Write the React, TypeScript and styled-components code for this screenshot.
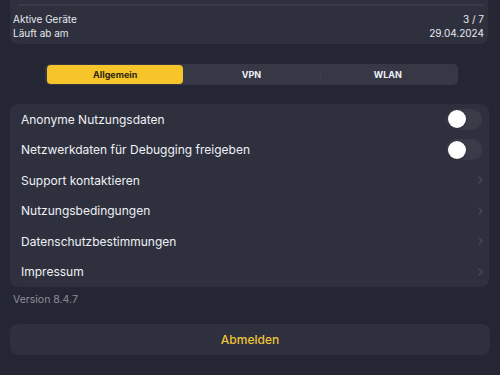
import React, { useState } from "react";
import styled, { createGlobalStyle } from "styled-components";

const GlobalStyle = createGlobalStyle`
  html, body {
    margin: 0;
    padding: 0;
    background: #252633;
    font-family: Inter, "Noto Sans", "Liberation Sans", sans-serif;
    overflow: hidden;
  }
`;

const Page = styled.div`
  width: 500px;
  height: 375px;
  box-sizing: border-box;
  padding: 0 11px 0 10px;
  display: flex;
  flex-direction: column;
  color: #eceef4;
`;

const Card = styled.div`
  background: #2e303e;
  border-radius: 8px;
`;

const InfoCard = styled(Card)`
  border-top-left-radius: 0;
  border-top-right-radius: 0;
  padding: 4px 4px 4px 3px;
  margin-right: 1px;
`;

const Divider = styled.div`
  height: 2px;
  background: #383a48;
  margin: 0 0 6px 5px;
`;

const InfoRow = styled.div`
  display: flex;
  justify-content: space-between;
  font-size: 10px;
  line-height: 14px;
  color: #e6e8ef;
`;

const SegmentWrap = styled.div`
  display: flex;
  padding: 20px 0 19px 35px;
`;

const Segmented = styled.div`
  width: 413px;
  height: 21px;
  box-sizing: border-box;
  padding: 1px 2px;
  background: #363846;
  border-radius: 5px;
  display: grid;
  grid-template-columns: repeat(3, 1fr);
  align-items: stretch;
`;

const Tab = styled.button<{ $active: boolean; $sep: boolean }>`
  position: relative;
  border: none;
  margin: 0;
  padding: 0;
  font-family: inherit;
  font-size: 9px;
  font-weight: 700;
  border-radius: 4px;
  cursor: pointer;
  background: ${({ $active }) => ($active ? "#f7c52a" : "transparent")};
  color: ${({ $active }) => ($active ? "#2b2610" : "#eef0f5")};

  &::before {
    content: "";
    display: ${({ $sep }) => ($sep ? "block" : "none")};
    position: absolute;
    left: 0;
    top: 5px;
    bottom: 5px;
    width: 1px;
    background: #3e404d;
  }
`;

const List = styled(Card)`
  display: flex;
  flex-direction: column;
  padding: 0;
`;

const Row = styled.div`
  height: 30.5px;
  display: flex;
  align-items: center;
  justify-content: space-between;
  padding: 0 6px 0 11px;
  font-size: 12px;
  color: #eef0f5;
`;

const Toggle = styled.div<{ $on: boolean }>`
  width: 36px;
  height: 21px;
  margin-right: 1px;
  border-radius: 11px;
  background: ${({ $on }) => ($on ? "#f7c52a" : "#393b49")};
  position: relative;
  cursor: pointer;

  &::after {
    content: "";
    position: absolute;
    top: 1.5px;
    left: ${({ $on }) => ($on ? "16.5px" : "1.5px")};
    width: 18px;
    height: 18px;
    border-radius: 50%;
    background: #ffffff;
    box-shadow: 0 1px 2px rgba(0, 0, 0, 0.4);
  }
`;

const Chevron = styled.span`
  width: 10px;
  display: flex;
  justify-content: flex-end;
  color: #474958;
`;

const Version = styled.div`
  font-size: 10.5px;
  color: #8c8e9b;
  padding: 6px 0 0 3px;
  height: 31px;
`;

const LogoutButton = styled.button`
  height: 31px;
  border: none;
  border-radius: 8px;
  background: #2e303e;
  color: #efc43a;
  font-family: inherit;
  font-size: 12px;
  font-weight: 500;
  cursor: pointer;
  margin-right: -1px;
`;

const ChevronIcon = () => (
  <svg width="5" height="8" viewBox="0 0 5 8">
    <path d="M1 1 L4 4 L1 7" stroke="currentColor" strokeWidth="1.3" fill="none" strokeLinecap="round" />
  </svg>
);

const tabs = ["Allgemein", "VPN", "WLAN"];
const links = ["Support kontaktieren", "Nutzungsbedingungen", "Datenschutzbestimmungen", "Impressum"];

export default function App() {
  const [tab, setTab] = useState(0);
  const [anon, setAnon] = useState(false);
  const [debug, setDebug] = useState(false);

  return (
    <>
      <GlobalStyle />
      <Page>
        <InfoCard>
          <Divider />
          <InfoRow>
            <span>Aktive Geräte</span>
            <span>3 / 7</span>
          </InfoRow>
          <InfoRow>
            <span>Läuft ab am</span>
            <span>29.04.2024</span>
          </InfoRow>
        </InfoCard>

        <SegmentWrap>
          <Segmented>
            {tabs.map((t, i) => (
              <Tab key={t} $active={tab === i} $sep={i === 2 && tab === 0} onClick={() => setTab(i)}>
                {t}
              </Tab>
            ))}
          </Segmented>
        </SegmentWrap>

        <List>
          <Row>
            <span>Anonyme Nutzungsdaten</span>
            <Toggle $on={anon} onClick={() => setAnon(!anon)} />
          </Row>
          <Row>
            <span>Netzwerkdaten für Debugging freigeben</span>
            <Toggle $on={debug} onClick={() => setDebug(!debug)} />
          </Row>
          {links.map((l) => (
            <Row key={l}>
              <span>{l}</span>
              <Chevron>
                <ChevronIcon />
              </Chevron>
            </Row>
          ))}
        </List>

        <Version>Version 8.4.7</Version>

        <LogoutButton>Abmelden</LogoutButton>
      </Page>
    </>
  );
}
